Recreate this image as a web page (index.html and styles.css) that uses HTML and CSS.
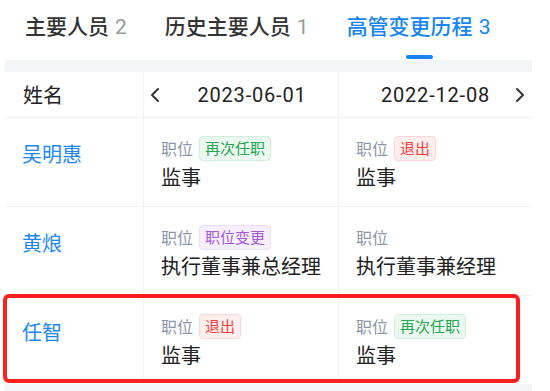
FILE: index.html
```html
<!DOCTYPE html>
<html>
<head>
  <title>高管变更历程</title>
  <link rel="stylesheet" href="styles.css">
</head>
<body>
  <div class="tabs">
    <div class="tab">主要人员<span class="count">2</span></div>
    <div class="tab">历史主要人员<span class="count">1</span></div>
    <div class="tab active">高管变更历程<span class="count">3</span></div>
  </div>

  <div class="panel">
    <div class="table">
      <div class="row head">
        <div class="cell name-cell">姓名</div>
        <div class="cell date-cell first">
          <svg class="arrow" width="10" height="16" viewBox="0 0 10 16"><path d="M8 2 L2 8 L8 14" fill="none" stroke="#333" stroke-width="2" stroke-linecap="round" stroke-linejoin="round"/></svg>
          <span class="date">2023-06-01</span>
        </div>
        <div class="cell date-cell last">
          <span class="date">2022-12-08</span>
          <svg class="arrow next" width="10" height="16" viewBox="0 0 10 16"><path d="M2 2 L8 8 L2 14" fill="none" stroke="#333" stroke-width="2" stroke-linecap="round" stroke-linejoin="round"/></svg>
        </div>
      </div>

      <div class="row">
        <div class="cell name-cell person">吴明惠</div>
        <div class="cell">
          <div class="label">职位<span class="badge green">再次任职</span></div>
          <div class="value">监事</div>
        </div>
        <div class="cell">
          <div class="label">职位<span class="badge red">退出</span></div>
          <div class="value">监事</div>
        </div>
      </div>

      <div class="row">
        <div class="cell name-cell person">黄烺</div>
        <div class="cell">
          <div class="label">职位<span class="badge purple">职位变更</span></div>
          <div class="value">执行董事兼总经理</div>
        </div>
        <div class="cell">
          <div class="label">职位</div>
          <div class="value">执行董事兼经理</div>
        </div>
      </div>

      <div class="row marked">
        <div class="cell name-cell person">任智</div>
        <div class="cell">
          <div class="label">职位<span class="badge red">退出</span></div>
          <div class="value">监事</div>
        </div>
        <div class="cell">
          <div class="label">职位<span class="badge green">再次任职</span></div>
          <div class="value">监事</div>
        </div>
        <div class="highlight"></div>
      </div>
    </div>
  </div>
</body>
</html>
```

FILE: styles.css
```css
body {
  margin: 0;
  background-color: #fff;
  font-family: Roboto, "Noto Sans CJK SC", sans-serif;
  color: #222;
}

/* Tabs */
.tabs {
  display: flex;
  gap: 38px;
  height: 60px;
  padding-left: 25px;
}

.tab {
  position: relative;
  font-size: 21px;
  font-weight: 500;
  line-height: 26px;
  padding-top: 14px;
  color: #333;
  white-space: nowrap;
}

.tab .count {
  margin-left: 6px;
  font-weight: 400;
  color: #9a9a9a;
}

.tab.active,
.tab.active .count {
  color: #1585f2;
}

.tab.active::after {
  content: "";
  position: absolute;
  left: 50%;
  bottom: 1px;
  width: 27px;
  height: 4px;
  margin-left: -13px;
  border-radius: 2px;
  background-color: #1585f2;
}

/* Table */
.panel {
  margin-left: 5px;
  width: 527px;
  background-color: #f4f5f7;
  padding: 12px 0 20px;
}

.table {
  background-color: #fff;
}

.row {
  position: relative;
  display: grid;
  grid-template-columns: 138px 195px 1fr;
  border-bottom: 1px solid #f1f2f4;
}

.row:last-child {
  border-bottom: none;
}

.cell {
  padding: 17px 17px 15px 17px;
  border-left: 1px solid #f1f2f4;
}

.cell:first-child {
  border-left: none;
}

.head .cell {
  height: 45px;
  padding: 0;
  display: flex;
  align-items: center;
  font-size: 20px;
}

.head .name-cell {
  padding-left: 18px;
}

.date-cell {
  position: relative;
}

.date-cell.first {
  padding-left: 6px;
}

.date {
  flex: 1;
  text-align: center;
  letter-spacing: 0.8px;
}

.date-cell.first .date {
  padding-left: 6px;
}

.arrow.next {
  position: absolute;
  right: 7px;
  top: 15px;
}

.person {
  font-size: 20px;
  color: #1a88f2;
  padding-top: 21px;
  padding-left: 17px;
}

.label {
  display: flex;
  align-items: center;
  height: 26px;
  font-size: 16px;
  color: #8d96a8;
}

.badge {
  margin-left: 6px;
  padding: 0 5px;
  height: 25px;
  line-height: 24px;
  font-size: 15px;
  border: 1px solid;
  border-radius: 4px;
  box-sizing: border-box;
}

.badge.green {
  color: #26a553;
  background-color: #ebf8ef;
  border-color: #d2eedb;
}

.badge.red {
  color: #f23d3d;
  background-color: #feefef;
  border-color: #fad6d6;
}

.badge.purple {
  color: #a35ad8;
  background-color: #f6effd;
  border-color: #ece0f8;
}

.value {
  margin-top: 4px;
  font-size: 20px;
  line-height: 26px;
  color: #222;
}

/* Highlight frame drawn over the last row */
.highlight {
  position: absolute;
  left: -2px;
  top: -2px;
  width: 517px;
  bottom: 1px;
  border: 4px solid #ff1f1f;
  border-radius: 6px;
  box-sizing: border-box;
  pointer-events: none;
}
```
